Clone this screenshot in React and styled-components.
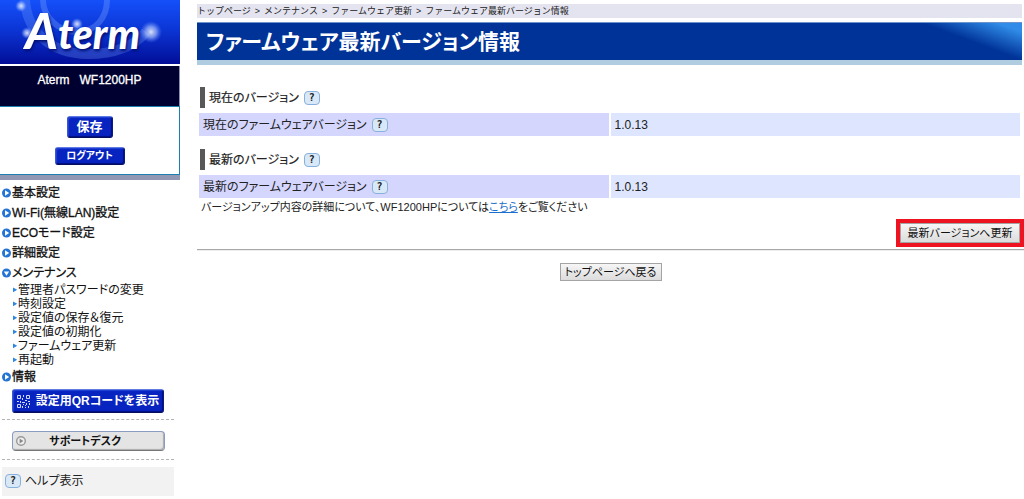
import React, { Fragment } from "react";
import styled, { createGlobalStyle, css } from "styled-components";

const GlobalStyle = createGlobalStyle`
  * { box-sizing: border-box; }
  body {
    margin: 0;
    background: #fff;
    color: #222;
    font: 12px/14px "Liberation Sans", "Noto Sans CJK JP", sans-serif;
    font-feature-settings: "palt";
  }
  button { font-family: inherit; font-feature-settings: inherit; white-space: nowrap; cursor: pointer; }
  ul { list-style: none; margin: 0; padding: 0; }
`;

const Page = styled.div`
  display: flex;
  align-items: flex-start;
  gap: 17px;
`;

/* ---------- side bar ---------- */

const Sidebar = styled.aside`
  flex: 0 0 180px;
`;

const Brand = styled.header`
  position: relative;
  height: 64px;
  background: linear-gradient(#1450fa, #0c36d6 45%, #020e98);
`;

const BrandArt = styled.svg`
  position: absolute;
  inset: 0;
  width: 100%;
  height: 100%;
`;

const BrandName = styled.div`
  position: relative;
  padding: 4px 0 0 25px;
  color: #fff;
  font: italic 900 41px/60px Lato, sans-serif;
  text-shadow: 1px 2px 3px #001070;
`;

const BrandInitial = styled.span`
  font-size: 50px;
  line-height: 50px;
`;

const Model = styled.div`
  height: 40px;
  margin-top: 2px;
  padding-top: 7px;
  border-right: 1px solid #8a90b0;
  background: #000030;
  color: #fff;
  font-size: 12px;
  line-height: 14px;
  text-align: center;
  white-space: pre;
  -webkit-text-stroke: 0.3px #fff;
`;

const SessionBox = styled.div`
  display: flex;
  flex-direction: column;
  align-items: center;
  gap: 9px;
  padding: 9px 0;
  border: solid #1d80ae;
  border-width: 1px 1px 1px 0;
  box-shadow: 0 5px 0 #9098b4;
`;

const BlueButton = styled.button`
  display: flex;
  align-items: center;
  justify-content: center;
  gap: 6px;
  width: ${(p) => p.$width};
  height: ${(p) => p.$height};
  padding: 0;
  border: 1px solid;
  border-color: #5f7ae0 #0a1c80 #050f60 #3c58cc;
  border-radius: 3px;
  background: #0824c0;
  box-shadow: inset -1px -1px 1px #001080, inset 1px 1px 1px #2444d8;
  color: #fff;
  font-size: ${(p) => p.$size};
  font-weight: 700;
  line-height: 16px;
`;

const Menu = styled.ul`
  padding: 2px 0 0 2px;
  margin-top: 6px;
`;

const menuText = css`
  color: #111;
  text-decoration: none;
  white-space: nowrap;
`;

const MenuLink = styled.a`
  ${menuText}
  display: flex;
  align-items: center;
  height: 20px;
  -webkit-text-stroke: 0.3px #111;
`;

const SubMenu = styled.ul`
  padding-left: 11px;
`;

const SubLink = styled.a`
  ${menuText}
  display: flex;
  align-items: center;
  height: 14px;
`;

const Tools = styled.div`
  display: flex;
  flex-direction: column;
  width: 172px;
  margin: 2px 0 0 2px;
`;

const ToolRow = styled.div`
  display: flex;
  justify-content: center;
  padding: ${(p) => p.$pad};
  border-bottom: 1px dashed #b4b4b4;
`;

const SupportButton = styled.button`
  display: grid;
  grid-template-columns: 10px 1fr 16px;
  align-items: center;
  width: 153px;
  height: 20px;
  padding: 0 3px;
  border: 1px solid #8c9cc0;
  border-bottom-color: #777;
  border-radius: 4px;
  background: #e4e4e4;
  box-shadow: inset -1px -1px 1px #aaa;
  color: #111;
  font-size: 11px;
  font-weight: 700;
  line-height: 14px;
`;

const HelpToggle = styled.div`
  display: flex;
  align-items: center;
  gap: 4px;
  height: 29px;
  margin-top: 7px;
  padding: 0 0 2px 3px;
  background: #f2f2f2;
  font-size: 12px;
`;

const HelpMark = styled.button`
  width: 16px;
  height: 14px;
  padding: 0;
  border: 1px solid #88b0dc;
  border-radius: 4px;
  background: #d8e8f6;
  color: #222;
  && { font-family: "DejaVu Sans Mono", monospace; }
  font-size: 10px;
  font-weight: 700;
  line-height: 12px;
  -webkit-text-stroke: 0;
`;

/* ---------- main column ---------- */

const Main = styled.main`
  flex: 1;
  min-width: 0;
  padding-top: 4px;
`;

const Content = styled.div`
  margin-right: 2px;
`;

const Breadcrumb = styled.nav`
  display: flex;
  gap: 4px;
  height: 14px;
  background: #e4e4f0;
  color: #222;
  font-size: 9px;
  line-height: 14px;
  font-feature-settings: normal;
  white-space: nowrap;
`;

const Title = styled.h1`
  height: 43px;
  margin: 4px 0 0;
  padding-left: 9px;
  border-top: 1px solid #6c94cc;
  border-bottom: 5px solid #b0cce0;
  background:
    linear-gradient(to bottom left, #308ce8 12%, rgba(48, 140, 232, 0) 50%) right top / 100px 37px no-repeat,
    #003398;
  background-clip: padding-box;
  color: #fff;
  font-size: 21px;
  font-weight: 700;
  line-height: 37px;
  white-space: nowrap;
`;

const Section = styled.section`
  margin-top: ${(p) => p.$gap};
`;

const SectionTitle = styled.h2`
  display: flex;
  align-items: center;
  gap: 5px;
  height: 21px;
  margin: 0 0 3px 3px;
  padding-left: 4px;
  border-left: 5px solid #585858;
  font-size: 12px;
  font-weight: 400;
  line-height: 14px;
  -webkit-text-stroke: 0.2px #222;
`;

const InfoTable = styled.table`
  width: 100%;
  table-layout: fixed;
  border-spacing: 2px;
`;

const LabelCell = styled.th`
  height: 23px;
  padding: 0 4px;
  background: #d4d6fe;
  font-weight: 400;
  text-align: left;
`;

const LabelBody = styled.div`
  display: flex;
  align-items: center;
  gap: 5px;
`;

const ValueCell = styled.td`
  padding: 0 4px;
  background: #dee6ff;
`;

const Note = styled.p`
  margin: 0;
  padding-left: 4px;
  font-size: 11px;
  line-height: 14px;
`;

const NoteLink = styled.a`
  color: #1a70cc;
`;

const ActionRow = styled.div`
  display: flex;
  justify-content: flex-end;
  margin-top: 5px;
`;

const Highlight = styled.div`
  border: 4px solid #ee1320;
`;

const GreyButton = styled.button`
  display: block;
  height: ${(p) => p.$height};
  width: ${(p) => p.$width};
  padding: 0;
  border: 1px solid #a4a4a4;
  background: linear-gradient(#f6f6f6, #dcdcdc);
  color: #111;
  font-size: 11px;
  line-height: 16px;
`;

const Rule = styled.hr`
  height: 2px;
  margin: 2px 0 12px;
  border: 0;
  border-top: 1px solid #a8a8a8;
  border-bottom: 1px solid #eee;
`;

const BackRow = styled.div`
  display: flex;
  justify-content: center;
`;

/* ---------- drawings ---------- */

function Bullet({ open }) {
  return (
    <svg width="10" height="10" viewBox="0 0 10 10" aria-hidden="true">
      <circle cx="4.500" cy="5" r="4.500" fill="#2474d4" />
      <path d={open ? "M1.900 3.500h5.200L4.500 7.700z" : "M3 2.300v5.400L7.200 5z"} fill="#fff" />
    </svg>
  );
}

function SubBullet() {
  return (
    <svg width="5" height="6" viewBox="0 0 5 6" aria-hidden="true">
      <path d="M0 .4v4.800L4.200 2.800z" fill="#2d86e0" />
    </svg>
  );
}

function QrMark() {
  return (
    <svg width="13" height="13" viewBox="0 0 13 13" fill="none" stroke="#cfd8ff" aria-hidden="true">
      <path d="M.5.5h3v3h-3zM9.5.5h3v3h-3zM.5 9.500h3v3h-3z" />
      <path d="M6.500 0v2M5.500 3v2M0 6.500h2M3.500 6v2M5 7.500h3M6.500 9v1M5.500 11v2M8 5.500h2M11 6.500h2M9.500 8v2M12.500 8v2M8 10.500h1M11.500 11v2M8.500 12v1" />
    </svg>
  );
}

function SupportMark() {
  return (
    <svg width="10" height="10" viewBox="0 0 10 10" aria-hidden="true">
      <circle cx="5" cy="5" r="4.300" fill="#eee" stroke="#999" strokeWidth="1.400" />
      <path d="M3.600 2.500v5L7.300 5z" fill="#888" />
    </svg>
  );
}

function BrandRings() {
  return (
    <BrandArt viewBox="0 0 180 64" aria-hidden="true">
      <defs>
        <radialGradient id="glow">
          <stop offset="0" stopColor="#fff" stopOpacity=".85" />
          <stop offset=".5" stopColor="#b8ccff" stopOpacity=".6" />
          <stop offset="1" stopColor="#6090ff" stopOpacity="0" />
        </radialGradient>
      </defs>
      <g fill="none" stroke="#7aa4ff">
        <path d="M25 0C27 31 50 54 88 54c26 0 46-8 58-22" strokeWidth="10" strokeOpacity=".28" />
        <path d="M43 0c0 17 16 32 34 32 19 0 30-15 30-32" strokeWidth="6" strokeOpacity=".35" />
      </g>
      <circle cx="21" cy="6" r="6" fill="url(#glow)" />
      <circle cx="27" cy="33" r="6" fill="url(#glow)" />
      <circle cx="77" cy="24" r="6" fill="url(#glow)" />
      <circle cx="151" cy="32" r="11" fill="url(#glow)" />
    </BrandArt>
  );
}

function Help({ label }) {
  return <HelpMark type="button" aria-label={label}>?</HelpMark>;
}

/* ---------- page ---------- */

const CRUMBS = ["トップページ", "メンテナンス", "ファームウェア更新", "ファームウェア最新バージョン情報"];

const MENU = [
  { label: "基本設定" },
  { label: "Wi-Fi(無線LAN)設定" },
  { label: "ECOモード設定" },
  { label: "詳細設定" },
  {
    label: "メンテナンス",
    children: [
      "管理者パスワードの変更",
      "時刻設定",
      "設定値の保存＆復元",
      "設定値の初期化",
      "ファームウェア更新",
      "再起動",
    ],
  },
  { label: "情報" },
];

function VersionSection({ title, label, value, gap }) {
  return (
    <Section $gap={gap}>
      <SectionTitle>
        {title}
        <Help label={title} />
      </SectionTitle>
      <InfoTable>
        <tbody>
          <tr>
            <LabelCell scope="row">
              <LabelBody>
                {label}
                <Help label={label} />
              </LabelBody>
            </LabelCell>
            <ValueCell>{value}</ValueCell>
          </tr>
        </tbody>
      </InfoTable>
    </Section>
  );
}

export default function App() {
  return (
    <>
      <GlobalStyle />
      <Page>
        <Sidebar>
          <Brand>
            <BrandRings />
            <BrandName><BrandInitial>A</BrandInitial>term</BrandName>
          </Brand>
          <Model>{"Aterm   WF1200HP"}</Model>
          <SessionBox>
            <BlueButton type="button" $width="46px" $height="22px" $size="13px">保存</BlueButton>
            <BlueButton type="button" $width="70px" $height="18px" $size="10px">ログアウト</BlueButton>
          </SessionBox>
          <Menu>
            {MENU.map(({ label, children }) => (
              <li key={label}>
                <MenuLink href="#"><Bullet open={!!children} />{label}</MenuLink>
                {children && (
                  <SubMenu>
                    {children.map((c) => (
                      <li key={c}><SubLink href="#"><SubBullet />{c}</SubLink></li>
                    ))}
                  </SubMenu>
                )}
              </li>
            ))}
          </Menu>
          <Tools>
            <ToolRow $pad="0 0 6px">
              <BlueButton type="button" $width="152px" $height="24px" $size="12px">
                <QrMark />設定用QRコードを表示
              </BlueButton>
            </ToolRow>
            <ToolRow $pad="11px 0 8px">
              <SupportButton type="button"><SupportMark />サポートデスク</SupportButton>
            </ToolRow>
            <HelpToggle><Help label="ヘルプ" />ヘルプ表示</HelpToggle>
          </Tools>
        </Sidebar>

        <Main>
          <Content>
            <Breadcrumb>
              {CRUMBS.map((c, i) => (
                <Fragment key={c}>
                  {i > 0 && <span>&gt;</span>}
                  <span>{c}</span>
                </Fragment>
              ))}
            </Breadcrumb>
            <Title>ファームウェア最新バージョン情報</Title>
            <VersionSection gap="22px" title="現在のバージョン" label="現在のファームウェアバージョン" value="1.0.13" />
            <VersionSection gap="11px" title="最新のバージョン" label="最新のファームウェアバージョン" value="1.0.13" />
            <Note>
              バージョンアップ内容の詳細について、WF1200HPについては<NoteLink href="#">こちら</NoteLink>をご覧ください
            </Note>
          </Content>
          <ActionRow>
            <Highlight>
              <GreyButton type="button" $width="120px" $height="20px">最新バージョンへ更新</GreyButton>
            </Highlight>
          </ActionRow>
          <Rule />
          <BackRow>
            <GreyButton type="button" $width="102px" $height="18px">トップページへ戻る</GreyButton>
          </BackRow>
        </Main>
      </Page>
    </>
  );
}
